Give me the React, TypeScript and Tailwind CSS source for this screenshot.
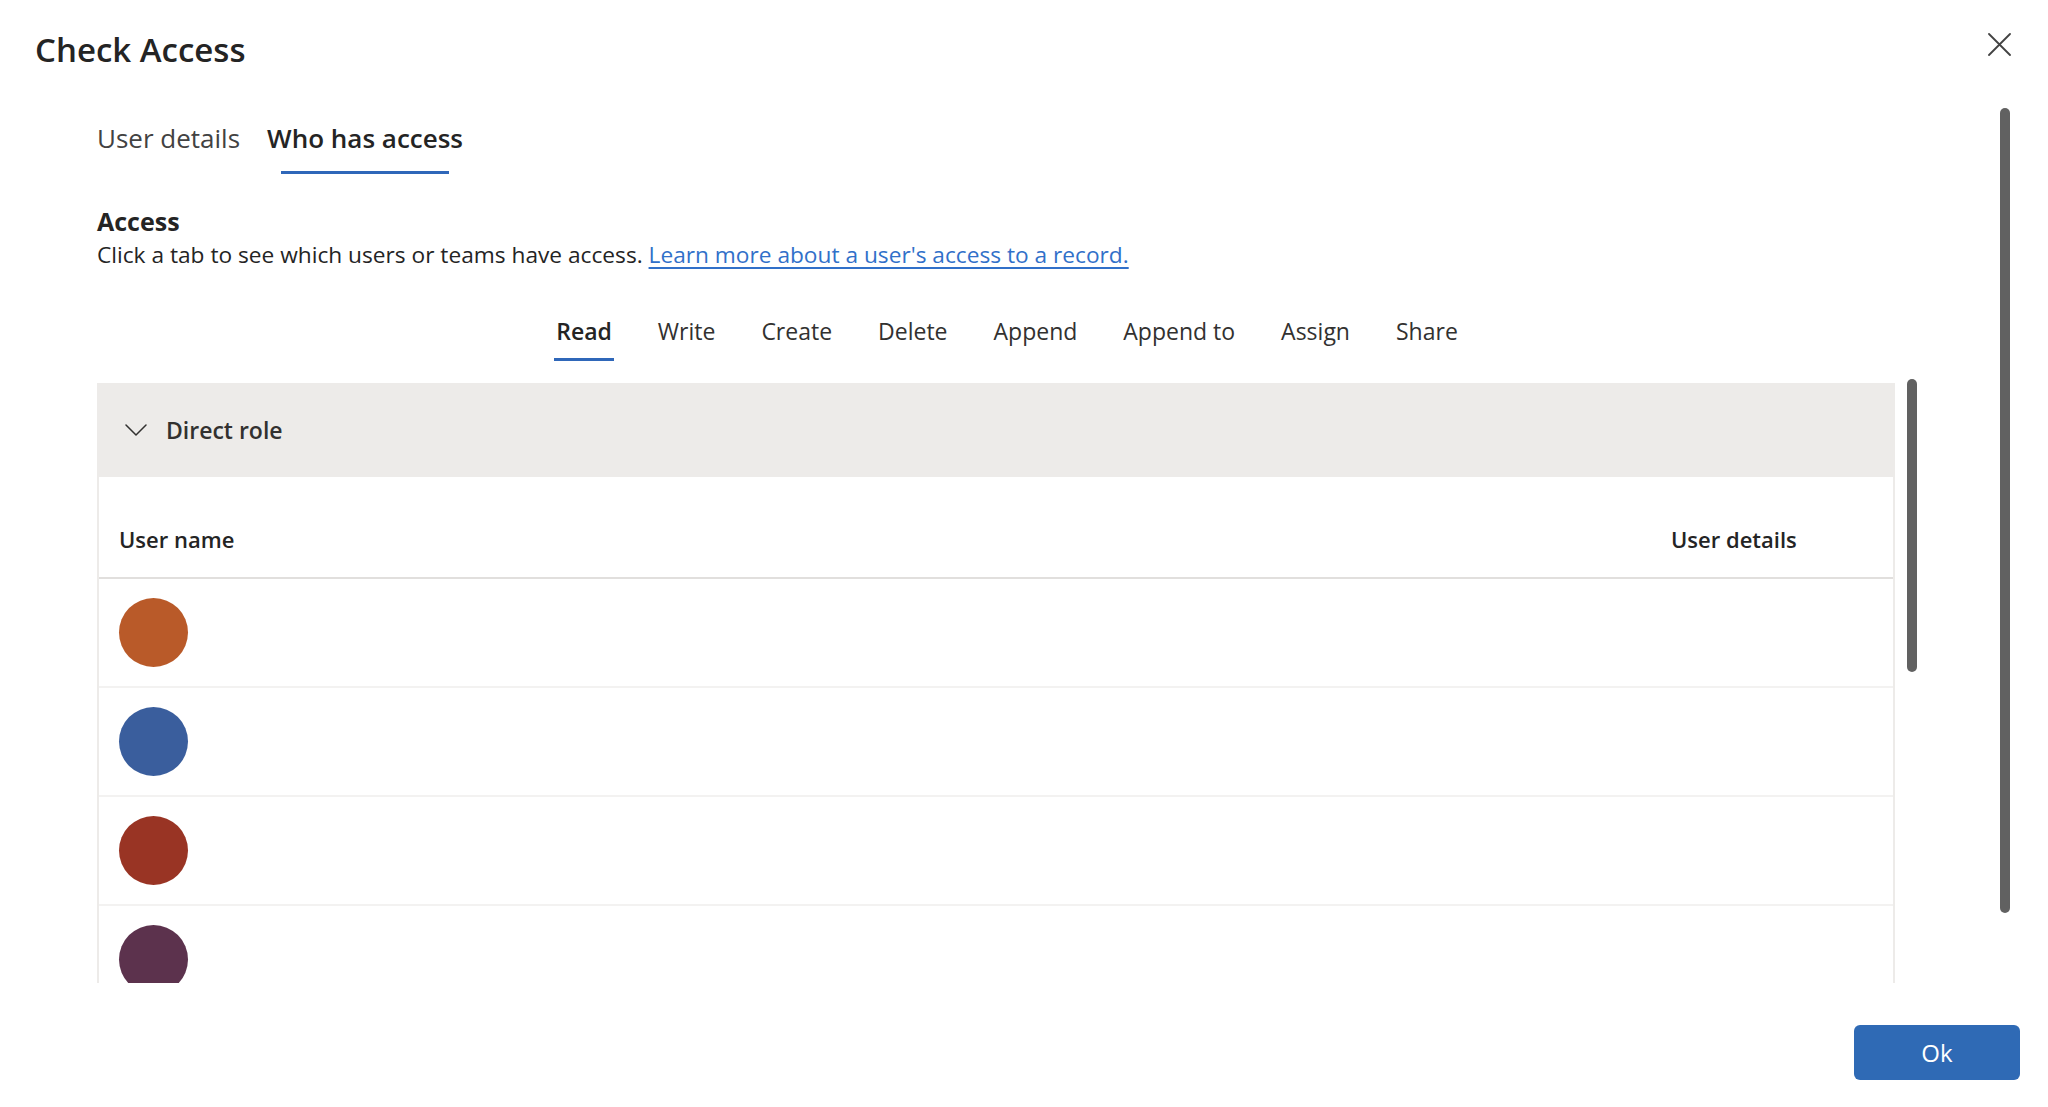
import { useState } from 'react';

const PERMISSION_TABS = ['Read', 'Write', 'Create', 'Delete', 'Append', 'Append to', 'Assign', 'Share'];

const USERS = [
  { id: 1, color: 'bg-[#b95a29]' },
  { id: 2, color: 'bg-[#3a5e9d]' },
  { id: 3, color: 'bg-[#993424]' },
  { id: 4, color: 'bg-[#5c324d]' },
];

function CloseIcon() {
  return (
    <svg width="23" height="23" viewBox="0 0 23 23" fill="none" stroke="#424242" strokeWidth="1.8" strokeLinecap="round">
      <path d="M1 1L22 22M22 1L1 22" />
    </svg>
  );
}

function ChevronDown() {
  return (
    <svg width="22" height="12" viewBox="0 0 22 12" fill="none" stroke="#323130" strokeWidth="1.5" strokeLinecap="round" strokeLinejoin="round">
      <path d="M1 1L11 11L21 1" />
    </svg>
  );
}

export default function App() {
  const [mainTab, setMainTab] = useState('access');
  const [permission, setPermission] = useState('Read');

  return (
    <div className="flex h-[1107px] w-[2048px] flex-col overflow-hidden bg-white font-['Open_Sans','Noto_Sans',sans-serif] text-[#242424]">
      <header className="flex h-[100px] shrink-0 items-start justify-between pl-[35px] pr-[37px]">
        <h1 className="pt-[28px] text-[33px] font-semibold leading-[44px] text-[#242424]">Check Access</h1>
        <button type="button" aria-label="Close" className="mt-[33px]">
          <CloseIcon />
        </button>
      </header>

      <div className="flex h-[883px] shrink-0">
        <main className="flex min-w-0 flex-1 flex-col pl-[97px] pr-[83px] pt-[20px]">
          <nav className="flex gap-[27px]">
            <button type="button" onClick={() => setMainTab('details')} className="flex flex-col">
              <span className={`text-[26px] leading-[36px] ${mainTab === 'details' ? 'font-semibold text-[#242424]' : 'text-[#424242]'}`}>
                User details
              </span>
              <span className={`mx-[14px] mt-[15px] h-[3px] ${mainTab === 'details' ? 'bg-[#2f67b9]' : 'bg-transparent'}`} />
            </button>
            <button type="button" onClick={() => setMainTab('access')} className="flex flex-col">
              <span className={`text-[26px] leading-[36px] ${mainTab === 'access' ? 'font-semibold text-[#242424]' : 'text-[#424242]'}`}>
                Who has access
              </span>
              <span className={`mx-[14px] mt-[15px] h-[3px] ${mainTab === 'access' ? 'bg-[#2f67b9]' : 'bg-transparent'}`} />
            </button>
          </nav>

          <section className="mt-[31px]">
            <h2 className="text-[25px] font-bold leading-[33px] text-[#242424]">Access</h2>
            <p className="text-[22.7px] leading-[33px] text-[#242424]">
              Click a tab to see which users or teams have access.{' '}
              <a href="#" className="text-[#3170c9] underline underline-offset-[4px]">
                Learn more about a user's access to a record.
              </a>
            </p>
          </section>

          <nav className="mt-[44px] flex justify-center gap-[46px]">
            {PERMISSION_TABS.map((tab) => (
              <button key={tab} type="button" onClick={() => setPermission(tab)} className="flex flex-col">
                <span className={`text-[23px] leading-[32px] ${permission === tab ? 'font-semibold text-[#242424]' : 'text-[#323130]'}`}>
                  {tab}
                </span>
                <span className={`-mx-[2px] mt-[11px] h-[3px] ${permission === tab ? 'bg-[#2f67b9]' : 'bg-transparent'}`} />
              </button>
            ))}
          </nav>

          <div className="mt-[22px] flex items-start gap-[12px]">
            <div className="h-[600px] min-w-0 flex-1 overflow-hidden border-x-2 border-[#edebe9]">
              <div className="flex h-[94px] items-center gap-[19px] bg-[#edebe9] pl-[26px]">
                <ChevronDown />
                <span className="text-[23px] font-semibold leading-[32px] text-[#323130]">Direct role</span>
              </div>

              <div className="flex h-[102px] border-b-2 border-[#e1dfdd] pl-[20px] pt-[47px]">
                <span className="flex-1 text-[22px] font-semibold leading-[30px] text-[#242424]">User name</span>
                <span className="w-[222px] text-[22px] font-semibold leading-[30px] text-[#242424]">User details</span>
              </div>

              {USERS.map((user) => (
                <div key={user.id} className="flex h-[109px] items-center border-b-2 border-[#f3f2f1] pl-[20px]">
                  <div className={`h-[69px] w-[69px] rounded-full ${user.color}`} />
                </div>
              ))}
            </div>
            <div className="-mt-[4px] h-[293px] w-[10px] shrink-0 rounded-full bg-[#616161]" />
          </div>
        </main>

        <div className="mr-[38px] mt-[8px] h-[805px] w-[10px] shrink-0 rounded-full bg-[#616161]" />
      </div>

      <footer className="flex justify-end pr-[28px] pt-[42px]">
        <button type="button" className="h-[55px] w-[166px] rounded-[6px] bg-[#2f6ab5] text-[24px] text-white">
          Ok
        </button>
      </footer>
    </div>
  );
}
